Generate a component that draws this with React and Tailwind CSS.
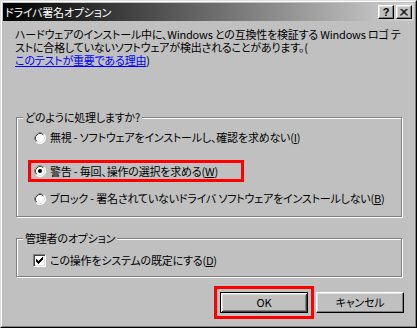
const raised =
  "border border-t-white border-l-white border-r-black border-b-black shadow-[inset_-1px_-1px_0_#808080,inset_1px_1px_0_#dfdfdf]";

function Radio({ checked }) {
  return (
    <svg width="12" height="12" viewBox="0 0 12 12" className="shrink-0">
      <circle cx="6" cy="6" r="5.5" fill="#fff" stroke="#fff" />
      <path d="M2.11 9.89 A5.5 5.5 0 0 1 9.89 2.11" fill="none" stroke="#808080" />
      <path d="M2.82 9.18 A4.5 4.5 0 0 1 9.18 2.82" fill="none" stroke="#404040" />
      <path d="M9.18 2.82 A4.5 4.5 0 0 1 2.82 9.18" fill="none" stroke="#dfdfdf" />
      {checked && <circle cx="6" cy="6" r="2" fill="#000" />}
    </svg>
  );
}

function Checkbox() {
  return (
    <div className="w-[13px] h-[13px] shrink-0 bg-white border border-t-[#808080] border-l-[#808080] border-r-white border-b-white shadow-[inset_1px_1px_0_#404040,inset_-1px_-1px_0_#dfdfdf]">
      <svg width="11" height="11" viewBox="0 0 11 11" className="block">
        <rect x="2" y="4" width="1" height="3" />
        <rect x="3" y="5" width="1" height="3" />
        <rect x="4" y="6" width="1" height="3" />
        <rect x="5" y="5" width="1" height="3" />
        <rect x="6" y="4" width="1" height="3" />
        <rect x="7" y="3" width="1" height="3" />
        <rect x="8" y="2" width="1" height="3" />
      </svg>
    </div>
  );
}

function Group({ title, className, children }) {
  return (
    <div className={`relative ml-[13px] w-[386px] border border-[#808080] shadow-[1px_1px_0_#fff,inset_1px_1px_0_#fff] ${className}`}>
      <span className="absolute left-[6px] -top-[7px] bg-[#c0c0c0] px-[2px] leading-[13px]">{title}</span>
      {children}
    </div>
  );
}

export default function App() {
  return (
    <div className="w-[417px] h-[328px] overflow-hidden bg-[#c0c0c0] font-['Noto_Sans_CJK_JP',sans-serif] text-[11px] tracking-[-0.2px] leading-[13px] text-black [font-feature-settings:'palt']">
      <div className="h-full border border-t-[#dfdfdf] border-l-[#dfdfdf] border-r-black border-b-black">
        <div className="h-full border border-t-white border-l-white border-r-[#808080] border-b-[#808080] p-[1px]">
          <div className="h-[18px] flex items-center justify-between bg-[linear-gradient(to_right,#000,#d4d4d4)]">
            <span className="pl-[2px] text-white">ドライバ署名オプション</span>
            <div className="flex gap-[2px] mr-[2px]">
              <div className={`w-[16px] h-[14px] bg-[#c0c0c0] flex items-center justify-center ${raised}`}>
                <span className="font-['Liberation_Sans',sans-serif] font-bold text-[11px] leading-[11px]">?</span>
              </div>
              <div className={`w-[16px] h-[14px] bg-[#c0c0c0] flex items-center justify-center ${raised}`}>
                <svg width="8" height="7" viewBox="0 0 8 7">
                  <path d="M0.5 0 L7 6.5 M1.5 0 L8 6.5 M0 6.5 L6.5 0 M1 6.5 L7.5 0" stroke="#000" strokeWidth="1" fill="none" />
                </svg>
              </div>
            </div>
          </div>

          <div className="mt-[7px] pl-[12px] whitespace-nowrap">
            <div>ハードウェアのインストール中に、Windows との互換性を検証する Windows ロゴ&nbsp;テ</div>
            <div>ストに合格していないソフトウェアが検出されることがあります。(</div>
            <div>
              <span className="text-[#0000ff] underline">このテストが重要である理由</span>)
            </div>
          </div>

          <Group title="どのように処理しますか?" className="mt-[50px] pt-[13px] pb-[11px]">
            <div className="flex items-center gap-[4px] pl-[17px] h-[13px] whitespace-nowrap">
              <Radio />
              <span>無視 - ソフトウェアをインストールし、確認を求めない(<u>I</u>)</span>
            </div>
            <div className="mt-[16px] ml-[11px] w-[216px] h-[22px] border-[3px] border-[#ff0000] flex items-center gap-[4px] pl-[3px] whitespace-nowrap">
              <Radio checked />
              <span>警告 - 毎回、操作の選択を求める(<u>W</u>)</span>
            </div>
            <div className="mt-[10px] flex items-center gap-[4px] pl-[17px] h-[13px] whitespace-nowrap">
              <Radio />
              <span>ブロック - 署名されていないドライバ ソフトウェアをインストールしない(<u>B</u>)</span>
            </div>
          </Group>

          <Group title="管理者のオプション" className="mt-[21px] pt-[15px] pb-[9px]">
            <div className="flex items-center gap-[4px] pl-[16px] whitespace-nowrap">
              <Checkbox />
              <span>この操作をシステムの既定にする(<u>D</u>)</span>
            </div>
          </Group>

          <div className="mt-[9px] flex items-start">
            <div className="ml-[211px] border-[3px] border-[#ff0000] p-[3px]">
              <div className="w-[88px] h-[21px] border border-black flex items-center justify-center shadow-[inset_1px_1px_0_#fff,inset_-1px_-1px_0_#404040,inset_2px_2px_0_#dfdfdf,inset_-2px_-2px_0_#808080]">
                OK
              </div>
            </div>
            <div className={`ml-[2px] mt-[6px] w-[88px] h-[21px] flex items-center justify-center ${raised}`}>
              キャンセル
            </div>
          </div>
        </div>
      </div>
    </div>
  );
}
